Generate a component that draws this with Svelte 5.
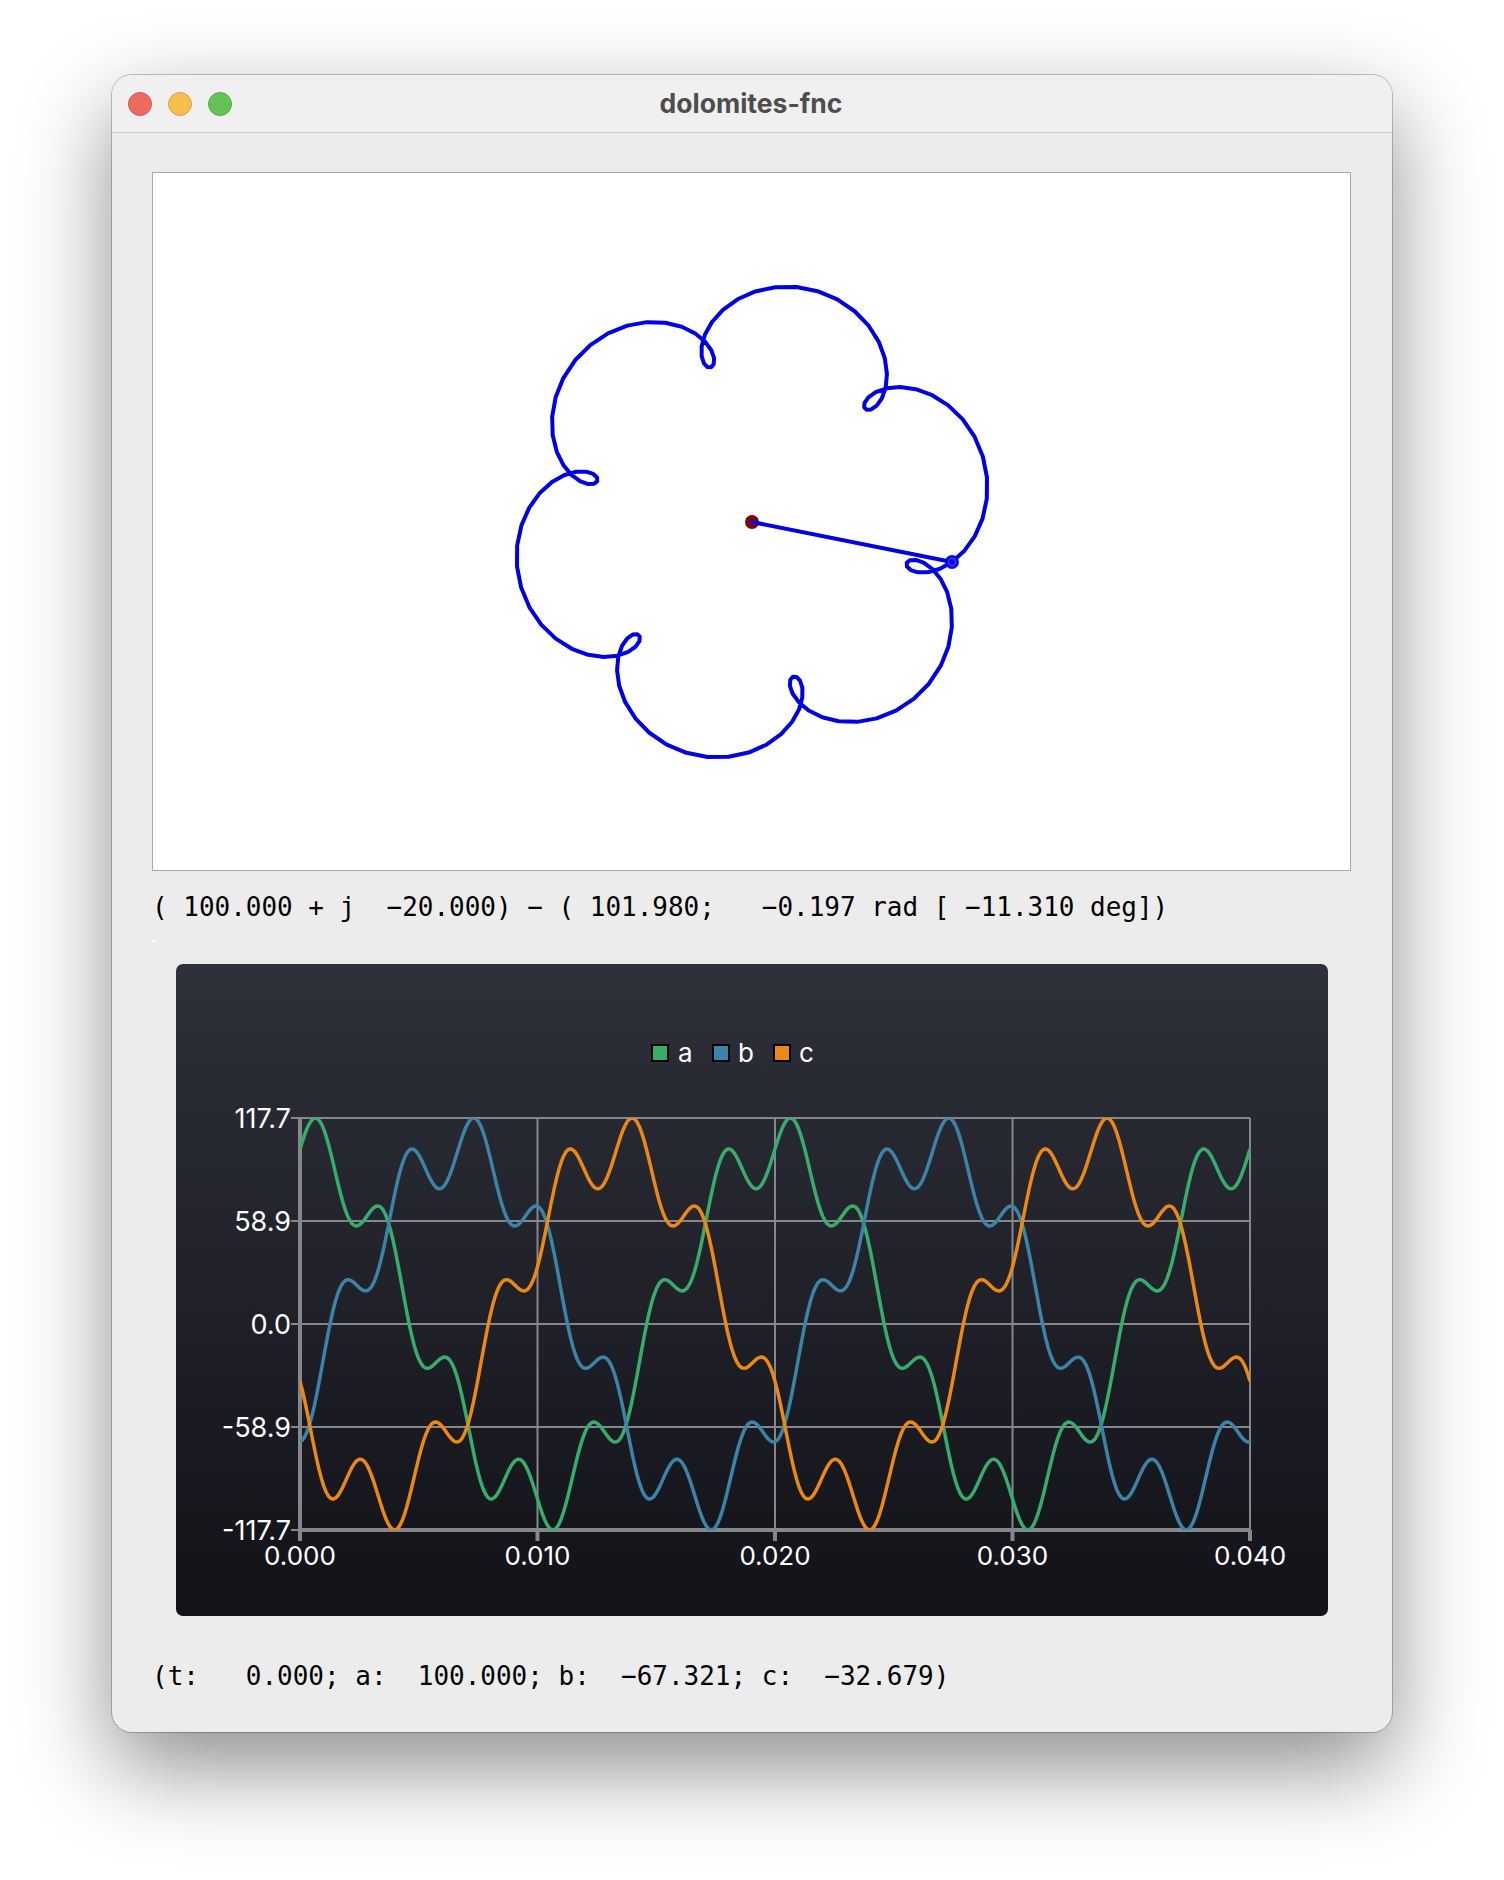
<script>
	// three phase signal with a 7th harmonic, the same numbers feed both plots
	const W = 2 * Math.PI * 50;
	const alpha = (t) => 100 * Math.cos(W * t) + 20 * Math.sin(7 * W * t);
	const beta = (t) => 100 * Math.sin(W * t) - 20 * Math.cos(7 * W * t);
	const S3 = Math.sqrt(3) / 2;

	const series = [
		{ name: 'a', color: '#38ad6b', fn: (t) => alpha(t) },
		{ name: 'b', color: '#3c84a7', fn: (t) => -0.5 * alpha(t) + S3 * beta(t) },
		{ name: 'c', color: '#eb8817', fn: (t) => -0.5 * alpha(t) - S3 * beta(t) }
	];

	// plot area inside the dark panel
	const X0 = 124;
	const X1 = 1074;
	const Y0 = 154;
	const Y1 = 566;
	const YMAX = 117.7;

	const px = (t) => X0 + (t / 0.04) * (X1 - X0);
	const py = (v) => Y1 - ((v + YMAX) / (2 * YMAX)) * (Y1 - Y0);

	function samples(n, step, f) {
		const out = [];
		for (let i = 0; i <= n; i++) out.push(f(i * step).join(','));
		return out.join(' ');
	}

	const flower = samples(140, 0.02 / 140, (t) => [(2 * alpha(t)).toFixed(2), (-2 * beta(t)).toFixed(2)]);
	const lines = series.map((s) => ({
		...s,
		points: samples(400, 0.0001, (t) => [px(t).toFixed(2), py(s.fn(t)).toFixed(2)])
	}));

	const xTicks = [0, 0.01, 0.02, 0.03, 0.04];
	const yTicks = [117.7, 58.85, 0, -58.85, -117.7];
	const yLabels = ['117.7', '58.9', '0.0', '-58.9', '-117.7'];
	const legend = [
		{ x: 476, tx: 502 },
		{ x: 537, tx: 562 },
		{ x: 598, tx: 623 }
	];
</script>

<div class="page">
	<div class="window">
		<div class="titlebar">
			<div class="lights">
				<span class="light red"></span>
				<span class="light yellow"></span>
				<span class="light green"></span>
			</div>
			<div class="title">dolomites-fnc</div>
		</div>

		<div class="content">
			<div class="canvas">
				<svg viewBox="-599 -349 1197 697" width="1197" height="697">
					<polyline class="curve" points={flower} />
					<circle cx="0" cy="0" r="7" fill="#800000" />
					<circle cx="200" cy="40" r="7" fill="#1010e6" />
					<line class="vector" x1="0" y1="0" x2="200" y2="40" />
					<circle class="ring" cx="200" cy="40" r="3.5" />
				</svg>
			</div>

			<div class="readout first">( 100.000 + j  −20.000) − ( 101.980;   −0.197 rad [ −11.310 deg])</div>
			<div class="speck"></div>

			<div class="panel">
				<svg viewBox="0 0 1152 652" width="1152" height="652">
					<defs>
						<clipPath id="plot">
							<rect x={X0} y={Y0} width={X1 - X0} height={Y1 - Y0} />
						</clipPath>
					</defs>

					{#each legend as item, i}
						<rect x={item.x} y="81" width="16" height="16" fill={series[i].color} stroke="#000" stroke-width="2" />
						<text class="tick" x={item.tx} y="98">{series[i].name}</text>
					{/each}

					{#each xTicks as t}
						<line class="grid" x1={px(t)} x2={px(t)} y1={Y0} y2={Y1} />
						<line class="axis" x1={px(t)} x2={px(t)} y1={Y1} y2={Y1 + 11} />
					{/each}
					{#each yTicks as v}
						<line class="grid" x1={X0} x2={X1} y1={py(v)} y2={py(v)} />
						<line class="tickmark" x1={X0 - 9} x2={X0} y1={py(v)} y2={py(v)} />
					{/each}
					<line class="axis" x1={X0} x2={X0} y1={Y0 - 1} y2={Y1 + 1} />
					<line class="axis" x1={X0} x2={X1 + 1} y1={Y1} y2={Y1} />

					<g clip-path="url(#plot)">
						{#each lines as s}
							<polyline class="trace" points={s.points} stroke={s.color} />
						{/each}
					</g>

					{#each yTicks as v, i}
						<text class="tick ylabel" text-anchor="end" x={X0 - 9} y={py(v) + 10}>{yLabels[i]}</text>
					{/each}
					{#each xTicks as t}
						<text class="tick" text-anchor="middle" x={px(t)} y={Y1 + 35}>{t.toFixed(3)}</text>
					{/each}
				</svg>
			</div>

			<div class="readout second">(t:   0.000; a:  100.000; b:  −67.321; c:  −32.679)</div>
		</div>
	</div>
</div>

<style>
	:global(body) {
		background: #fff;
	}

	.page {
		box-sizing: border-box;
		height: 1880px;
		padding: 75px 0 0 112px;
		overflow: hidden;
	}

	.window {
		width: 1280px;
		height: 1657px;
		background: #ececec;
		border-radius: 20px;
		box-shadow: 0 0 0 1px rgba(0, 0, 0, 0.22), 0 35px 90px rgba(0, 0, 0, 0.45);
		overflow: hidden;
	}

	.titlebar {
		position: relative;
		display: flex;
		align-items: center;
		justify-content: center;
		height: 57px;
		background: #f0f0f0;
		border-bottom: 1px solid #cfcfcf;
	}

	.lights {
		position: absolute;
		left: 16px;
		top: 17px;
		display: flex;
		gap: 16px;
	}

	.light {
		width: 24px;
		height: 24px;
		border-radius: 50%;
		box-sizing: border-box;
		border: 1px solid;
	}

	.red {
		background: #ee6a5f;
		border-color: #d0564c;
	}

	.yellow {
		background: #f6be4f;
		border-color: #d6a243;
	}

	.green {
		background: #61c454;
		border-color: #52a945;
	}

	.title {
		font-family: Inter, 'Liberation Sans', sans-serif;
		font-weight: 700;
		font-size: 26.5px;
		color: #4d4d4d;
		margin: -2px 2px 0 0;
	}

	.content {
		display: flex;
		flex-direction: column;
		padding: 39px 0 0 40px;
	}

	.canvas {
		width: 1197px;
		height: 697px;
		background: #fff;
		border: 1px solid #a9a9a9;
	}

	svg {
		display: block;
	}

	.curve {
		fill: none;
		stroke: #0000e6;
		stroke-width: 4;
		stroke-linejoin: round;
	}

	.vector {
		stroke: #0000e6;
		stroke-width: 4;
		stroke-linecap: round;
	}

	.ring {
		fill: none;
		stroke: #2a3cf0;
		stroke-width: 1.5;
	}

	.readout {
		font-family: 'DejaVu Sans Mono', monospace;
		font-size: 25.97px;
		line-height: 30px;
		color: #000;
		white-space: pre;
	}

	.first {
		margin-top: 21px;
	}

	.speck {
		width: 4px;
		height: 2px;
		margin-top: 18px;
		background: #fff;
	}

	.panel {
		width: 1152px;
		height: 652px;
		margin: 22px 0 0 24px;
		border-radius: 7px;
		overflow: hidden;
		background: linear-gradient(#2e303a, #121218);
	}

	.second {
		margin-top: 45px;
	}

	.grid {
		stroke: #86878c;
		stroke-width: 2;
	}

	.axis {
		stroke: #86878c;
		stroke-width: 4;
	}

	.tickmark {
		stroke: #86878c;
		stroke-width: 2;
	}

	.trace {
		fill: none;
		stroke-width: 3.5;
		stroke-linejoin: round;
	}

	.tick {
		font-family: Inter, 'Liberation Sans', sans-serif;
		font-size: 26px;
		fill: #fff;
	}

	.ylabel {
		font-size: 27px;
	}
</style>
